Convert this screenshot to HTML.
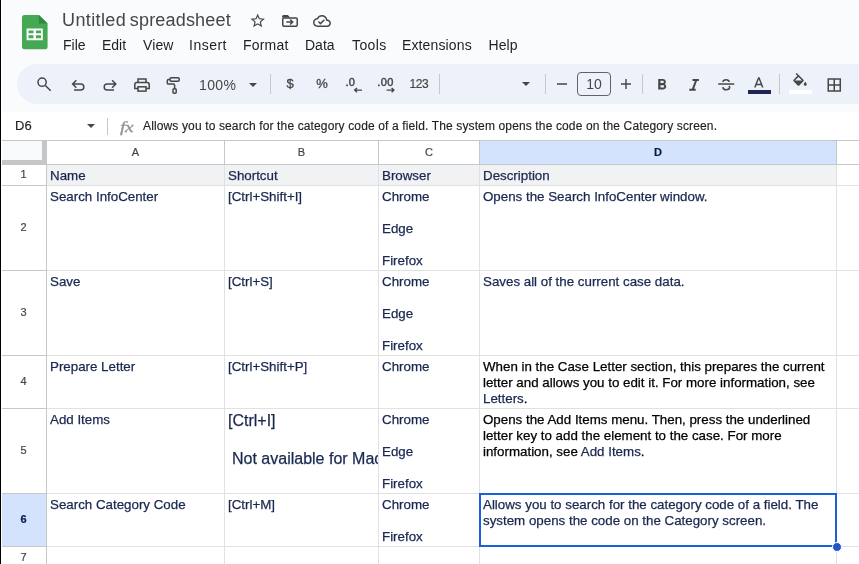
<!DOCTYPE html>
<html lang="en">
<head>
<meta charset="utf-8">
<title>Untitled spreadsheet</title>
<style>
*{box-sizing:border-box;margin:0;padding:0}
html,body{width:859px;height:564px;overflow:hidden;background:#f9fbfd;font-family:"Liberation Sans",Arial,sans-serif;color:#1f1f1f}
#app{will-change:transform;position:relative;width:859px;height:564px;overflow:hidden;background:#f9fbfd}
.abs{position:absolute}
#leftedge{left:0;top:0;width:2px;height:564px;background:#fff;border-left:1px solid #000;z-index:50}
#title{left:62px;top:9px;font-size:18px;line-height:22px;color:#444746;white-space:nowrap;letter-spacing:.18px}
.menu{top:36px;font-size:14px;line-height:18px;color:#1f1f1f;white-space:nowrap}
#toolbar{left:17px;top:64px;width:900px;height:40px;border-radius:20px;background:#edf2fa}
.tsep{top:74px;width:1px;height:20px;background:#c7c7c7}
.ttext{font-size:14px;line-height:18px;color:#444746;white-space:nowrap}
svg{position:absolute;overflow:visible}
#fbar{left:1px;top:112px;width:858px;height:28px;background:#fff}
#fbarline{left:0;top:140px;width:859px;height:1px;background:#c7c7c7}
#grid{left:0;top:141px;width:859px;height:423px;background:#fff}
.hl{position:absolute;left:0;width:859px;height:1px;background:#e1e1e1}
.vl{position:absolute;top:0;width:1px;height:423px;background:#e1e1e1}
.ch{-webkit-text-stroke:.2px;position:absolute;top:0;height:23px;font-size:11px;line-height:23px;text-align:center;color:#444746;background:#fff}
.rh{-webkit-text-stroke:.2px;position:absolute;left:1px;width:45px;font-size:11px;text-align:center;color:#444746;background:#fff;display:flex;align-items:center;justify-content:center;padding-bottom:2px}
.cell{-webkit-text-stroke:.25px;position:absolute;font-size:13.333px;line-height:16px;color:#1a2850;white-space:nowrap;overflow:hidden;padding:3px 3px 0 3px}
.cell.w{white-space:normal}
.blk{color:#000}
</style>
</head>
<body>
<div id="app">
  <div id="leftedge" class="abs"></div>

  <!-- logo -->
  <svg class="abs" style="left:22.200px;top:14.800px" width="25.600" height="34.300" viewBox="0 0 25.600 34.300">
    <path d="M2.500 0H16.900l8.700 8.600V31.800a2.500 2.500 0 0 1-2.500 2.500H2.500A2.500 2.500 0 0 1 0 31.800V2.500A2.500 2.500 0 0 1 2.500 0z" fill="#45a853"/>
    <path d="M16.900 0l8.700 8.600h-8.700z" fill="#2f8a3d"/>
    <path d="M4.600 13.400h16.200v11.900H4.600zM6.500 15.400v2.900h5v-2.900zm7.400 0v2.900H19v-2.900zM6.500 20.200v3h5v-3zm7.400 0v3H19v-3z" fill="#fff" fill-rule="evenodd"/>
  </svg>

  <div id="title" class="abs"><span style="letter-spacing:.38px">Untitled</span><span style="margin-left:-1.500px"> spreadsheet</span></div>

  <!-- title icons -->
  <svg class="abs" style="left:249.250px;top:11.900px" width="17.400" height="17.400" viewBox="0 0 24 24"><path fill="#444746" d="M22 9.240l-7.190-.620L12 2 9.190 8.630 2 9.240l5.460 4.730L5.820 21 12 17.270 18.180 21l-1.630-7.030L22 9.240zM12 15.400l-3.760 2.270 1-4.280-3.320-2.880 4.380-.380L12 6.100l1.710 4.040 4.380.380-3.320 2.880 1 4.280L12 15.400z"/></svg>
  <svg class="abs" style="left:0;top:0" width="400" height="40" viewBox="0 0 400 40"><path fill="#444746" d="M282 16.500q0-1.500 1.500-1.500h4.300l2.400 2.400h-8.200z"/><rect x="282.750" y="17.900" width="14.500" height="8.300" rx="1.200" fill="none" stroke="#444746" stroke-width="1.500"/><path fill="none" stroke="#444746" stroke-width="1.500" d="M286.300 22h6.200M290.200 19.500l2.500 2.500-2.500 2.500"/></svg>
  <svg class="abs" style="left:313px;top:12.300px" width="17.900" height="17.900" viewBox="0 0 24 24"><path fill="#444746" d="M19.350 10.040C18.670 6.590 15.640 4 12 4 9.110 4 6.600 5.640 5.350 8.040 2.340 8.360 0 10.910 0 14c0 3.310 2.690 6 6 6h13c2.760 0 5-2.240 5-5 0-2.640-2.050-4.780-4.650-4.960zM19 18H6c-2.210 0-4-1.790-4-4 0-2.050 1.530-3.760 3.560-3.970l1.070-.110.500-.950C8.080 7.140 9.940 6 12 6c2.620 0 4.880 1.860 5.390 4.430l.300 1.500 1.530.110c1.560.100 2.780 1.410 2.780 2.960 0 1.650-1.350 3-3 3zm-9-3.820l-2.090-2.090L6.500 13.500 10 17l6.010-6.010-1.410-1.410z"/></svg>

  <!-- menu -->
  <div class="abs menu" style="left:63px">File</div>
  <div class="abs menu" style="left:102px">Edit</div>
  <div class="abs menu" style="left:143px;letter-spacing:.1px">View</div>
  <div class="abs menu" style="left:189px;letter-spacing:.5px">Insert</div>
  <div class="abs menu" style="left:243px;letter-spacing:.2px">Format</div>
  <div class="abs menu" style="left:305px">Data</div>
  <div class="abs menu" style="left:352px;letter-spacing:.4px">Tools</div>
  <div class="abs menu" style="left:402px;letter-spacing:.13px">Extensions</div>
  <div class="abs menu" style="left:488.500px;letter-spacing:.1px">Help</div>

  <!-- toolbar -->
  <div id="toolbar" class="abs"></div>
  <svg class="abs" style="left:0;top:0" width="859" height="564" viewBox="0 0 859 564" fill="none" stroke="#444746" stroke-width="1.5">
    <!-- search -->
    <circle cx="42.100" cy="82.200" r="4.100"/>
    <path d="M45.400 85.500l5.300 5.300"/>
    <!-- undo -->
    <path d="M76.300 80.300l-3.700 3.700 3.700 3.700M72.800 84h8a3 3 0 0 1 0 6h-6.800"/>
    <!-- redo -->
    <path d="M112.100 80.300l3.700 3.700-3.700 3.700M115.600 84h-8.400a3 3 0 0 0 0 6h6.800"/>
    <!-- print -->
    <path d="M138 82.500V79h8v3.500M138 88.400h-3.200v-3.900a2 2 0 0 1 2-2h10.400a2 2 0 0 1 2 2v3.900H146"/>
    <rect x="138" y="86.800" width="8" height="4.300"/>
    <!-- paint roller -->
    <rect x="170" y="77.800" width="9.200" height="3.500" rx="1.200"/>
    <path d="M170 79.400h-1.500q-1.200 0-1.200 1.200v2.300q0 1.200 1.200 1.200h5q1.100 0 1.100 1.100v3.400"/>
    <rect x="173" y="88.800" width="3.200" height="4.400" rx="1"/>
    <!-- borders -->
    <rect x="828.250" y="79" width="12" height="12"/>
    <path d="M834.250 79v12M828.250 85h12"/>
    <!-- italic -->
    <path d="M692.500 80h6.400M689.300 89.800h6.400M696.300 80l-3.700 9.800" stroke-width="2"/>
    <!-- strike -->
    <path d="M718.200 84h16"/>
    <path d="M729.300 81.900c-.300-1.400-1.500-2.200-3.200-2.200-1.800 0-3 .800-3.200 2.200M722.800 87.100c.200 1.600 1.500 2.700 3.400 2.700 1.900 0 3.400-.900 3.400-2.500 0-.600-.200-1-.400-1.400"/>
    <!-- minus plus -->
    <path d="M557 84h10M621 84h10M626 79v10" stroke-width="1.400"/>
    <!-- arrows for decimals -->
    <path d="M362 90.100h-7M357 87.900l-2.300 2.200 2.300 2.200" stroke-width="1.400"/>
    <path d="M386.600 90.100h7M391.600 87.900l2.300 2.200-2.300 2.200" stroke-width="1.400"/>
  </svg>
  <div class="abs ttext" style="left:199px;top:76px;letter-spacing:.4px">100%</div>
  <svg class="abs" style="left:249px;top:83px" width="8" height="4" viewBox="0 0 8 4"><path fill="#444746" d="M0 0h8L4 4z"/></svg>
  <div class="abs tsep" style="left:270px"></div>
  <div class="abs ttext" style="left:286.500px;top:75px;font-size:13px;-webkit-text-stroke:.3px">$</div>
  <div class="abs ttext" style="left:316.300px;top:75px;font-size:13px;-webkit-text-stroke:.3px">%</div>
  <div class="abs ttext" style="left:345.500px;top:73px;font-size:11px;-webkit-text-stroke:.45px;letter-spacing:.3px">.0</div>
  <div class="abs ttext" style="left:377.300px;top:73px;font-size:11px;-webkit-text-stroke:.45px;letter-spacing:.4px">.00</div>
  <div class="abs ttext" style="left:409.500px;top:75px;font-size:12px;-webkit-text-stroke:.2px;letter-spacing:-.4px">123</div>
  <div class="abs tsep" style="left:439px"></div>
  <svg class="abs" style="left:522px;top:82px" width="8" height="4" viewBox="0 0 8 4"><path fill="#444746" d="M0 0h8L4 4z"/></svg>
  <div class="abs tsep" style="left:545px"></div>
  <div class="abs" style="left:577px;top:72px;width:34px;height:24px;border:1px solid #5f6368;border-radius:4px;font-size:14px;line-height:22px;text-align:center;color:#444746">10</div>
  <div class="abs tsep" style="left:642px"></div>
  <svg class="abs" style="left:652.700px;top:75.700px" width="17.900" height="17.900" viewBox="0 0 24 24"><path fill="#444746" d="M15.600 10.790c.970-.670 1.650-1.770 1.650-2.790 0-2.260-1.750-4-4-4H7v14h7.040c2.090 0 3.710-1.700 3.710-3.790 0-1.520-.860-2.820-2.150-3.420zM10 6.500h3c.830 0 1.500.670 1.500 1.500s-.670 1.500-1.500 1.500h-3v-3zm3.500 9H10v-3h3.500c.830 0 1.500.670 1.500 1.500s-.670 1.500-1.500 1.500z"/></svg>
  <svg class="abs" style="left:750.100px;top:75px" width="17.600" height="17.600" viewBox="0 0 24 24"><path fill="#444746" d="M11 3L5.500 17h2.250l1.120-3h6.250l1.120 3h2.250L13 3h-2zm-1.380 9L12 5.670 14.380 12H9.620z"/></svg>
  <div class="abs" style="left:748px;top:90px;width:23px;height:4px;background:#1b274d"></div>
  <div class="abs tsep" style="left:779px"></div>
  <svg class="abs" style="left:790.500px;top:73.400px" width="18" height="18" viewBox="0 0 24 24"><path fill="#444746" d="M16.560 8.940L7.620 0 6.210 1.410l2.380 2.380-5.150 5.150c-.590.590-.590 1.540 0 2.120l5.500 5.500c.290.290.680.440 1.060.440s.770-.150 1.060-.440l5.500-5.500c.590-.580.590-1.530 0-2.120zM5.210 10L10 5.210 14.790 10H5.210zM19 11.500s-2 2.170-2 3.500c0 1.100.900 2 2 2s2-.900 2-2c0-1.330-2-3.500-2-3.500z"/></svg>
  <div class="abs" style="left:789px;top:90px;width:23px;height:4px;background:#fff"></div>

  <!-- formula bar -->
  <div id="fbar" class="abs"></div>
  <div class="abs" style="left:15px;top:118px;font-size:13px;line-height:16px;color:#1f1f1f;-webkit-text-stroke:.15px">D6</div>
  <svg class="abs" style="left:87px;top:124px" width="8" height="4" viewBox="0 0 8 4"><path fill="#444746" d="M0 0h8L4 4z"/></svg>
  <div class="abs" style="left:107px;top:118px;width:1px;height:17px;background:#c7c7c7"></div>
  <div class="abs" style="left:119.500px;top:118px;font-family:'Liberation Serif',serif;font-style:italic;font-size:15px;line-height:18px;color:#8f9498;letter-spacing:-.3px;-webkit-text-stroke:.3px;transform:scaleX(1.3);transform-origin:0 0">fx</div>
  <div class="abs" style="left:143px;top:118px;font-size:12px;line-height:16px;color:#1f1f1f;white-space:nowrap;letter-spacing:.135px;-webkit-text-stroke:.15px">Allows you to search for the category code of a field. The system opens the code on the Category screen.</div>
  <div id="fbarline" class="abs"></div>

  <!-- grid -->
  <div id="grid" class="abs">
    <!-- row 1 grey bg -->
    <div class="abs" style="left:47px;top:24px;width:789px;height:20px;background:#f1f2f4"></div>
    <!-- horizontal lines (relative to grid top=141) -->
    <div class="hl" style="top:44px"></div>
    <div class="hl" style="top:129px"></div>
    <div class="hl" style="top:214px"></div>
    <div class="hl" style="top:267px"></div>
    <div class="hl" style="top:352px"></div>
    <div class="hl" style="top:405px"></div>
    <!-- vertical lines -->
    <div class="vl" style="left:224px"></div>
    <div class="vl" style="left:378px"></div>
    <div class="vl" style="left:479px"></div>
    <div class="vl" style="left:836px"></div>

    <!-- column headers -->
    <div class="ch" style="left:47px;width:177px">A</div>
    <div class="ch" style="left:225px;width:153px">B</div>
    <div class="ch" style="left:379px;width:100px">C</div>
    <div class="ch" style="left:480px;width:356px;background:#d3e3fd;color:#041e49;font-weight:bold">D</div>
    <div class="ch" style="left:837px;width:22px"></div>
    <div class="abs" style="left:0;top:23px;width:859px;height:1px;background:#c7c7c7"></div>
    <div class="abs" style="left:224px;top:0;width:1px;height:23px;background:#c7c7c7"></div>
    <div class="abs" style="left:378px;top:0;width:1px;height:23px;background:#c7c7c7"></div>
    <div class="abs" style="left:479px;top:0;width:1px;height:23px;background:#c7c7c7"></div>
    <div class="abs" style="left:836px;top:0;width:1px;height:23px;background:#c7c7c7"></div>

    <!-- corner -->
    <div class="abs" style="left:1px;top:0;width:46px;height:24px;background:#c4c7c5"></div>
    <div class="abs" style="left:1px;top:0;width:41px;height:19px;background:#f8f9fa"></div>

    <!-- row headers -->
    <div class="rh" style="top:24px;height:20px">1</div>
    <div class="rh" style="top:45px;height:84px">2</div>
    <div class="rh" style="top:130px;height:84px">3</div>
    <div class="rh" style="top:215px;height:52px">4</div>
    <div class="rh" style="top:268px;height:84px">5</div>
    <div class="rh" style="top:353px;height:52px;background:#d3e3fd;color:#041e49;font-weight:bold">6</div>
    <div class="rh" style="top:406px;height:21px">7</div>
    <div class="abs" style="left:46px;top:24px;width:1px;height:399px;background:#c7c7c7"></div>
    <div class="abs" style="left:1px;top:44px;width:45px;height:1px;background:#c7c7c7"></div>
    <div class="abs" style="left:1px;top:129px;width:45px;height:1px;background:#c7c7c7"></div>
    <div class="abs" style="left:1px;top:214px;width:45px;height:1px;background:#c7c7c7"></div>
    <div class="abs" style="left:1px;top:267px;width:45px;height:1px;background:#c7c7c7"></div>
    <div class="abs" style="left:1px;top:352px;width:45px;height:1px;background:#c7c7c7"></div>
    <div class="abs" style="left:1px;top:405px;width:45px;height:1px;background:#c7c7c7"></div>

    <!-- row 1 -->
    <div class="cell" style="left:47px;top:24px;width:177px;height:18px">Name</div>
    <div class="cell" style="left:225px;top:24px;width:153px;height:18px">Shortcut</div>
    <div class="cell" style="left:379px;top:24px;width:100px;height:18px">Browser</div>
    <div class="cell" style="left:480px;top:24px;width:356px;height:18px">Description</div>

    <!-- row 2 -->
    <div class="cell" style="left:47px;top:45px;width:177px;height:84px">Search InfoCenter</div>
    <div class="cell" style="left:225px;top:45px;width:153px;height:84px">[Ctrl+Shift+I]</div>
    <div class="cell" style="left:379px;top:45px;width:100px;height:84px">Chrome<br><br>Edge<br><br>Firefox</div>
    <div class="cell" style="left:480px;top:45px;width:356px;height:84px">Opens the Search InfoCenter window.</div>

    <!-- row 3 -->
    <div class="cell" style="left:47px;top:130px;width:177px;height:84px">Save</div>
    <div class="cell" style="left:225px;top:130px;width:153px;height:84px">[Ctrl+S]</div>
    <div class="cell" style="left:379px;top:130px;width:100px;height:84px">Chrome<br><br>Edge<br><br>Firefox</div>
    <div class="cell" style="left:480px;top:130px;width:356px;height:84px">Saves all of the current case data.</div>

    <!-- row 4 -->
    <div class="cell" style="left:47px;top:215px;width:177px;height:52px">Prepare Letter</div>
    <div class="cell" style="left:225px;top:215px;width:153px;height:52px">[Ctrl+Shift+P]</div>
    <div class="cell" style="left:379px;top:215px;width:100px;height:52px">Chrome</div>
    <div class="cell w blk" style="left:480px;top:215px;width:356px;height:52px">When in the Case Letter section, this prepares the current letter and allows you to edit it. For more information, see <span style="color:#1a2850">Letters</span>.</div>

    <!-- row 5 -->
    <div class="cell" style="left:47px;top:268px;width:177px;height:84px">Add Items</div>
    <div class="cell" style="left:225px;top:268px;width:153px;height:84px;font-size:16px;line-height:19px;padding-top:2px">[Ctrl+I]<br><br><span style="padding-left:4px">Not available for Mac.</span></div>
    <div class="cell" style="left:379px;top:268px;width:100px;height:84px">Chrome<br><br>Edge<br><br>Firefox</div>
    <div class="cell w blk" style="left:480px;top:268px;width:356px;height:84px">Opens the Add Items menu. Then, press the underlined letter key to add the element to the case. For more information, see <span style="color:#1a2850">Add Items</span>.</div>

    <!-- row 6 -->
    <div class="cell" style="left:47px;top:353px;width:177px;height:52px">Search Category Code</div>
    <div class="cell" style="left:225px;top:353px;width:153px;height:52px">[Ctrl+M]</div>
    <div class="cell" style="left:379px;top:353px;width:100px;height:52px">Chrome<br><br>Firefox</div>
    <div class="cell w" style="left:480px;top:353px;width:356px;height:52px">Allows you to search for the category code of a field. The system opens the code on the Category screen.</div>

    <!-- selection -->
    <div class="abs" style="left:479px;top:352px;width:358px;height:54px;border:2px solid #1a5fdc"></div>
    <div class="abs" style="left:832px;top:401px;width:10px;height:10px;border-radius:50%;background:#2254cd;border:1px solid #fff"></div>
  </div>
</div>
</body>
</html>
